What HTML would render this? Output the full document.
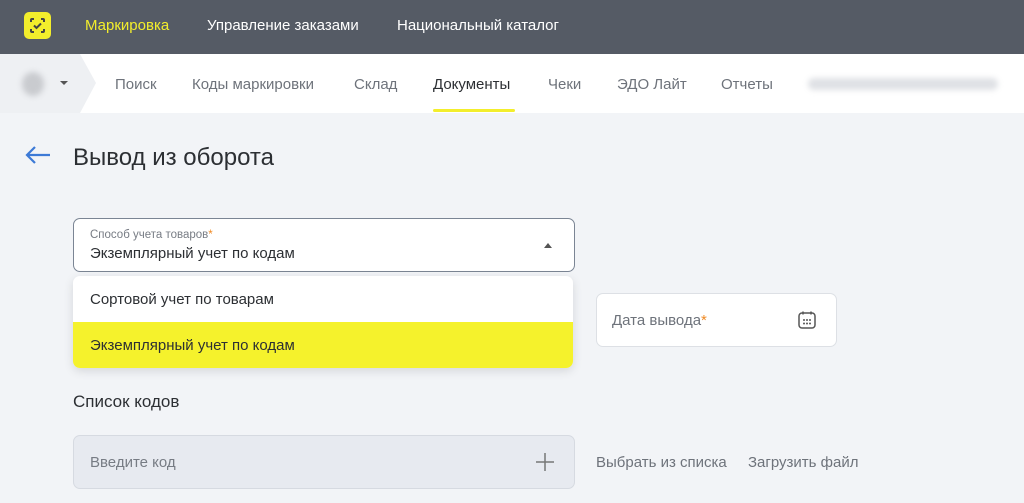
<!DOCTYPE html>
<html><head><meta charset="utf-8"><style>
*{box-sizing:border-box;margin:0;padding:0}
body{width:1024px;height:503px;overflow:hidden;background:#f2f4f7;font-family:"Liberation Sans",sans-serif;position:relative;color:#2c2f33}
.top{position:absolute;left:0;top:0;width:1024px;height:54px;background:#555b65}
.top .t{position:absolute;top:17px;font-size:15px;color:#fff}
.logo{position:absolute;left:24px;top:12px;width:27px;height:27px;background:#f3ee2c;border-radius:5px}
.nav{position:absolute;left:0;top:54px;width:1024px;height:59px;background:#fff}
.navl{position:absolute;left:0;top:0;width:96px;height:59px;background:#eef0f3;clip-path:polygon(0 0,80px 0,96px 29px,80px 59px,0 59px)}
.nav .i{position:absolute;top:22px;font-size:15px;color:#6e737b}
.abs{position:absolute}
.box{position:absolute;background:#fff;border-radius:7px}
</style></head><body>
<div class="top">
<div class="logo"><svg width="27" height="27" viewBox="0 0 27 27"><path d="M7 10V8a1 1 0 0 1 1-1h2M17 7h2a1 1 0 0 1 1 1v2M20 17v2a1 1 0 0 1-1 1h-2M10 20H8a1 1 0 0 1-1-1v-2" fill="none" stroke="#444" stroke-width="2"/><path d="M10 13.5l2.5 2.5 4.5-4.5" fill="none" stroke="#444" stroke-width="2"/></svg></div>
<div class="t" style="left:85px;color:#f3ee2c">Маркировка</div>
<div class="t" style="left:207px">Управление заказами</div>
<div class="t" style="left:397px">Национальный каталог</div>
</div>
<div class="nav">
<div class="navl"></div>
<div class="abs" style="left:22px;top:18px;width:22px;height:24px;border-radius:50%;background:#c9cbcf;filter:blur(3px)"></div>
<div class="abs" style="left:60px;top:27px;width:0;height:0;border-left:4px solid transparent;border-right:4px solid transparent;border-top:4px solid #555"></div>
<div class="i" style="left:115px">Поиск</div>
<div class="i" style="left:192px">Коды маркировки</div>
<div class="i" style="left:354px">Склад</div>
<div class="i" style="left:433px;color:#2c2f33">Документы</div>
<div class="abs" style="left:433px;top:55px;width:82px;height:3px;background:#f3ee2c;border-radius:2px"></div>
<div class="i" style="left:548px">Чеки</div>
<div class="i" style="left:617px">ЭДО Лайт</div>
<div class="i" style="left:721px">Отчеты</div>
<div class="abs" style="left:808px;top:24px;width:190px;height:12px;background:#dfe1e5;filter:blur(3px);border-radius:6px"></div>
</div>
<svg class="abs" style="left:24px;top:145px" width="28" height="20" viewBox="0 0 28 20"><path d="M26 10H3M11 2L3 10l8 8" fill="none" stroke="#3d7ad6" stroke-width="2.2"/></svg>
<div class="abs" style="left:73px;top:144px;font-size:24px;color:#2c2f33">Вывод из оборота</div>
<div class="box" style="left:73px;top:218px;width:502px;height:54px;border:1px solid #7b8594"></div>
<div class="abs" style="left:90px;top:229px;font-size:11.5px;color:#777c84">Способ учета товаров<span style="color:#f08a24">*</span></div>
<div class="abs" style="left:90px;top:245px;font-size:15px">Экземплярный учет по кодам</div>
<div class="abs" style="left:544px;top:243px;border-left:4px solid transparent;border-right:4px solid transparent;border-bottom:5px solid #555"></div>
<div class="box" style="left:596px;top:293px;width:241px;height:54px;border:1px solid #dde0e5"></div>
<div class="abs" style="left:612px;top:312px;font-size:15px;color:#6e737b">Дата вывода<span style="color:#f08a24">*</span></div>
<svg class="abs" style="left:797px;top:310px" width="20" height="20" viewBox="0 0 20 20"><rect x="2" y="3" width="16" height="15" rx="3" fill="none" stroke="#555" stroke-width="1.5"/><path d="M6 1.5v3M14 1.5v3" stroke="#555" stroke-width="1.5"/><g fill="#555"><circle cx="7" cy="10" r="1"/><circle cx="10" cy="10" r="1"/><circle cx="13" cy="10" r="1"/><circle cx="7" cy="13.5" r="1"/><circle cx="10" cy="13.5" r="1"/><circle cx="13" cy="13.5" r="1"/></g></svg>
<div class="box" style="left:73px;top:276px;width:500px;height:92px;overflow:hidden;box-shadow:0 3px 10px rgba(0,0,0,.12)">
<div style="height:46px;padding:15px 0 0 17px;font-size:15px">Сортовой учет по товарам</div>
<div style="height:46px;padding:15px 0 0 17px;font-size:15px;background:#f5f22c">Экземплярный учет по кодам</div>
</div>
<div class="abs" style="left:73px;top:392px;font-size:17px">Список кодов</div>
<div class="box" style="left:73px;top:435px;width:502px;height:54px;background:#e7eaf0;border:1px solid #d6dae1"></div>
<div class="abs" style="left:90px;top:454px;font-size:15px;color:#777c84">Введите код</div>
<svg class="abs" style="left:536px;top:453px" width="18" height="18"><path d="M9 0v18M0 9h18" stroke="#777" stroke-width="1.5"/></svg>
<div class="abs" style="left:596px;top:454px;font-size:15px;color:#6e737b">Выбрать из списка</div>
<div class="abs" style="left:748px;top:454px;font-size:15px;color:#6e737b">Загрузить файл</div>
</body></html>
